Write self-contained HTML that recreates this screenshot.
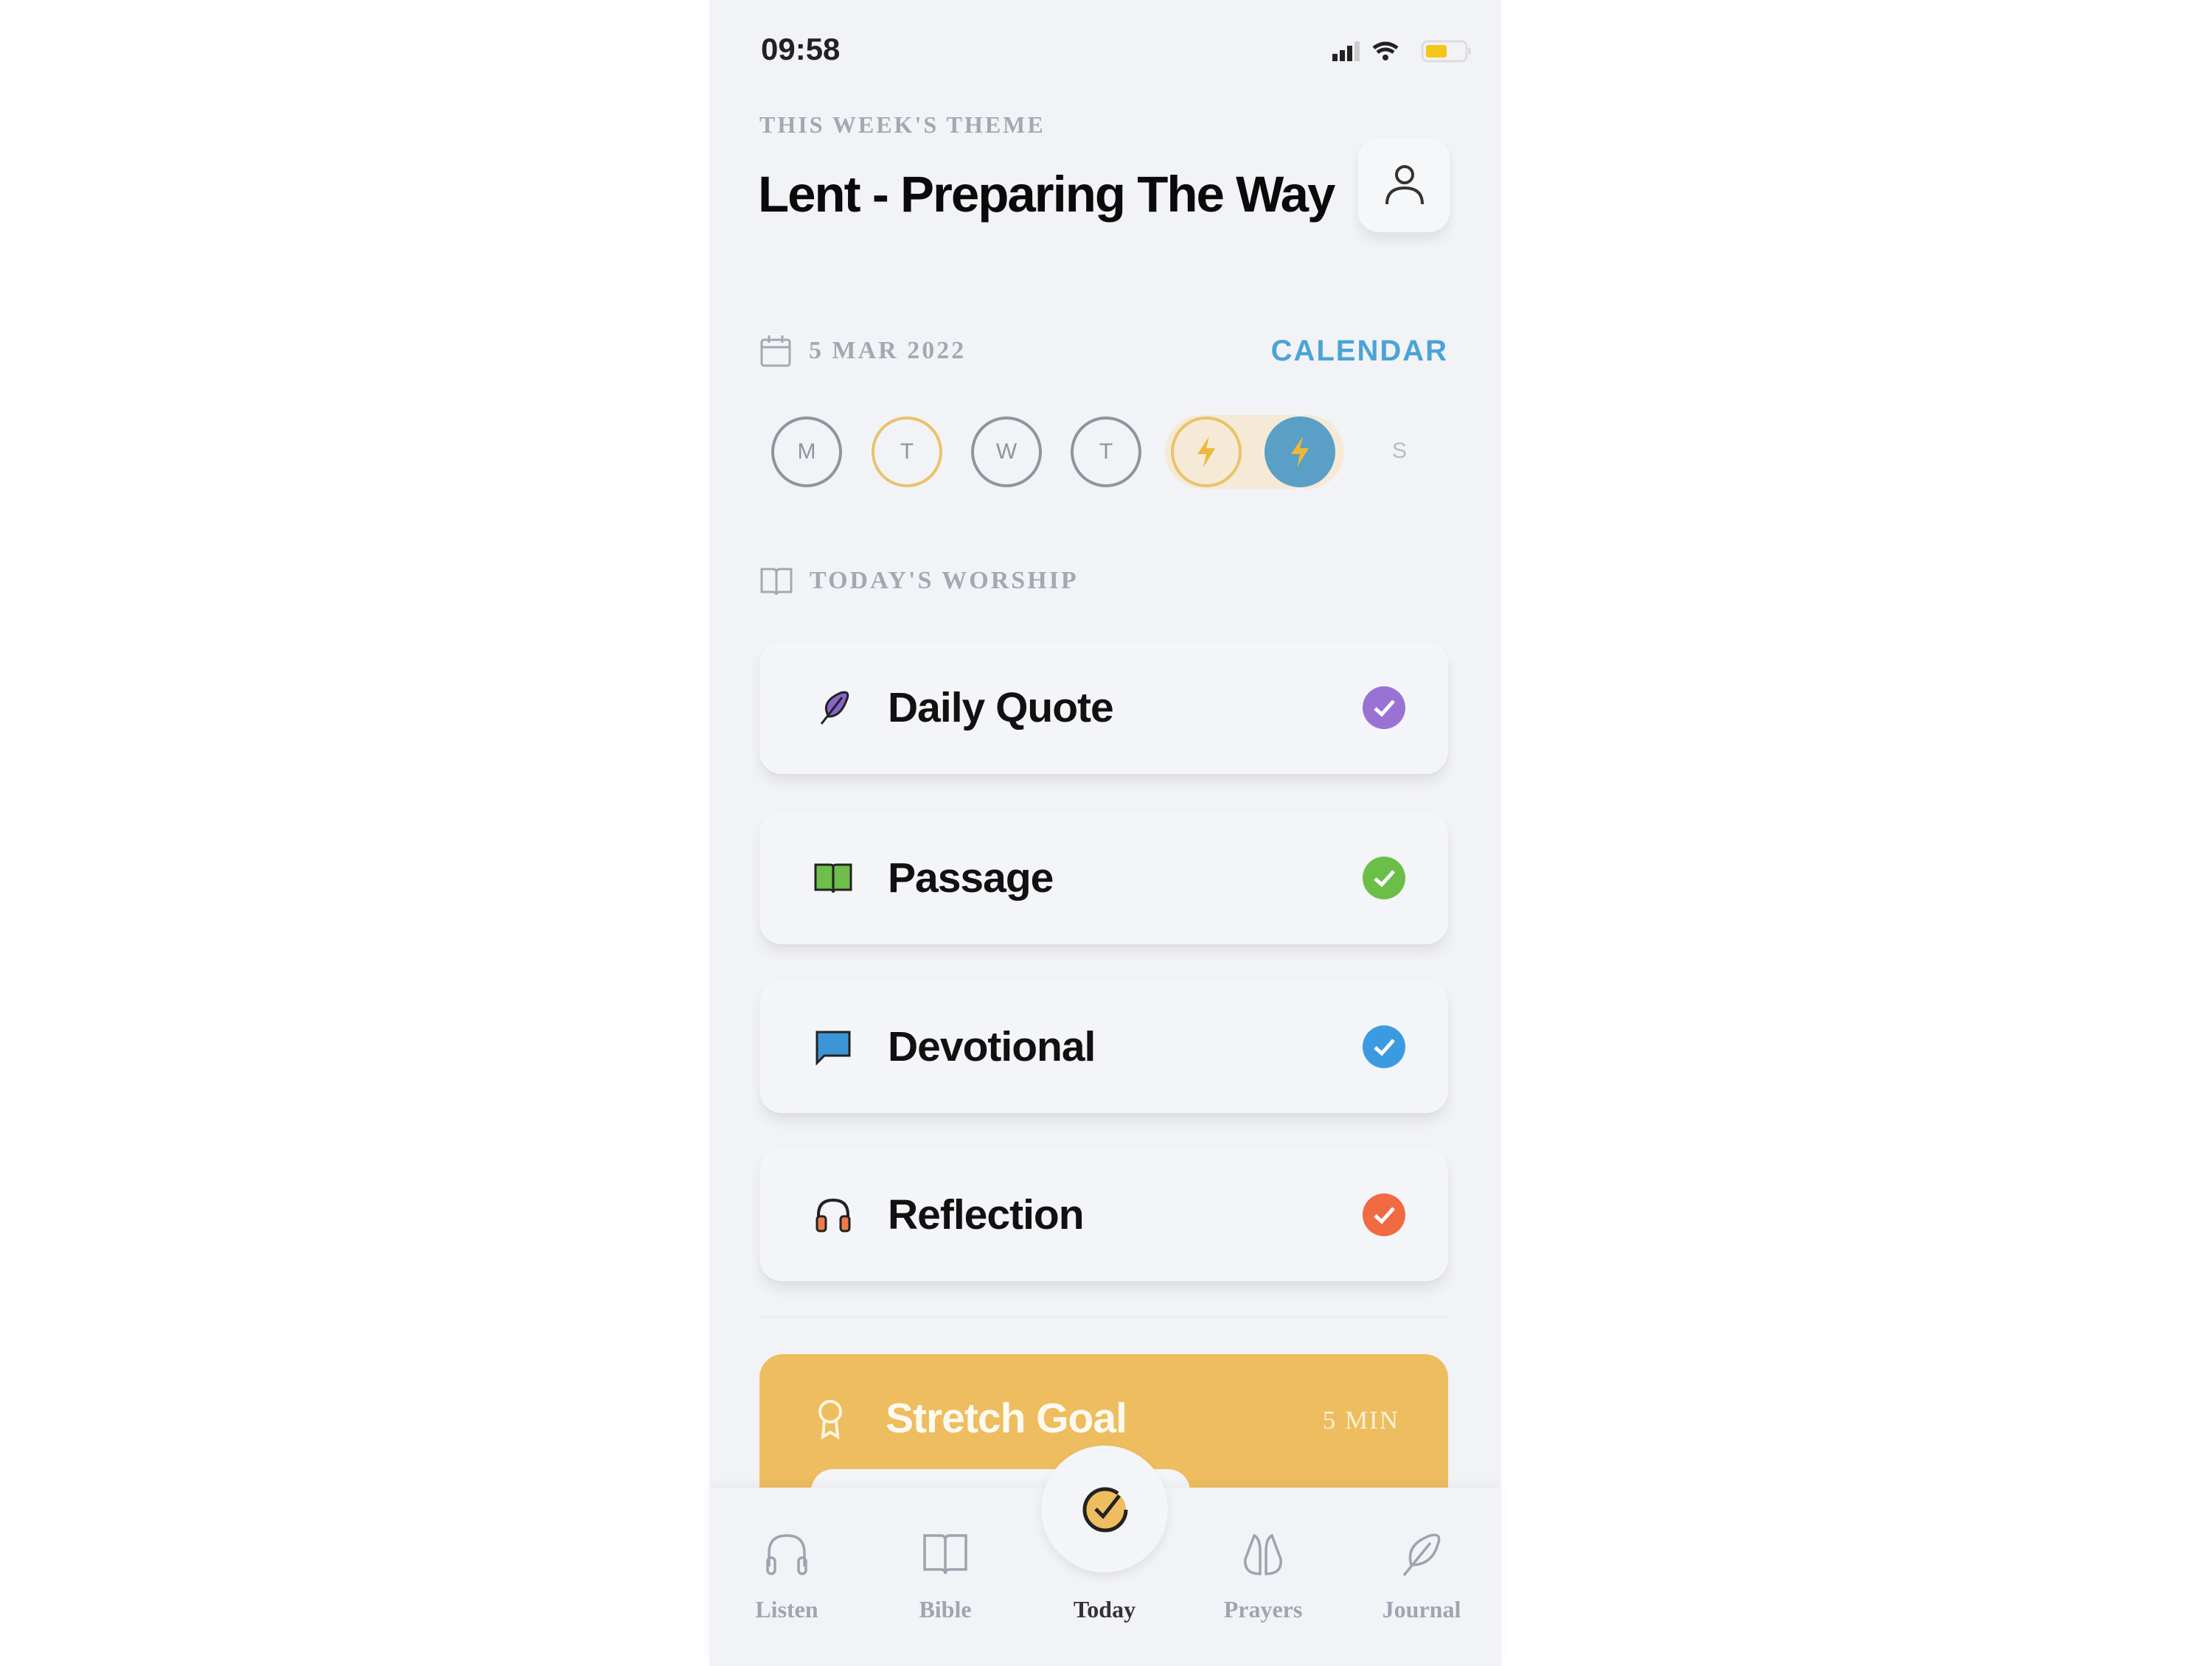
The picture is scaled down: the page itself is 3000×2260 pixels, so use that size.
<!DOCTYPE html>
<html><head><meta charset="utf-8">
<style>
*{margin:0;padding:0;box-sizing:border-box}
body{width:3000px;height:2250px;background:#fff;position:relative;overflow:hidden;font-family:"Liberation Sans",sans-serif}
#w{position:absolute;left:0;top:0;width:3000px;height:2250px;transform:translate(-8px,-5px)}
.ph{position:absolute;left:970px;top:0;width:1074px;height:2260px;background:#f2f3f7}
.a{position:absolute}
.serif{font-family:"Liberation Serif",serif}
.lbl{color:#a3a8b2;font-size:31px;letter-spacing:3px;font-weight:bold}
.card{position:absolute;left:1038px;width:934px;height:180px;border-radius:30px;background:#f4f5f8;box-shadow:0 12px 18px rgba(0,0,0,.07),0 2px 4px rgba(0,0,0,.04)}
.card .t{position:absolute;left:174px;top:50%;transform:translateY(-50%);font-size:57px;font-weight:bold;color:#111;letter-spacing:-1px}
.card .ic{position:absolute;left:72px;top:62px;width:56px;height:56px}
.card .ck{position:absolute;left:818px;top:61px;width:58px;height:58px;border-radius:50%}
.card .ck svg{position:absolute;left:0;top:0}
.day{position:absolute;top:567px;width:96px;height:96px;border-radius:50%;border:4px solid #8f949e;color:#8f949e;font-size:30px;text-align:center;line-height:88px}
.tab{position:absolute;top:2170px;width:200px;text-align:center;font-family:"Liberation Serif",serif;font-weight:bold;font-size:32px;color:#a0a5af}
.ti{position:absolute;top:2080px}
</style></head><body>
<div class="ph" style="left:962px"></div>
<div id="w">
<div class="a" style="left:1040px;top:48px;font-size:42px;font-weight:bold;color:#222">09:58</div>
<svg class="a" style="left:1815px;top:58px" width="190" height="34" viewBox="0 0 190 34">
<rect x="0" y="20" width="7" height="10" fill="#222"/><rect x="10" y="15" width="7" height="15" fill="#222"/><rect x="20" y="9" width="7" height="21" fill="#222"/><rect x="30" y="3" width="7" height="27" fill="#ccc"/>
<path d="M56 12 Q72 0 88 12" stroke="#222" stroke-width="5" fill="none"/><path d="M61 18 Q72 10 83 18" stroke="#222" stroke-width="5" fill="none"/><circle cx="72" cy="25" r="4" fill="#222"/>
<rect x="122" y="3" width="60" height="27" rx="7" fill="none" stroke="#ddd" stroke-width="3"/><rect x="127" y="8" width="28" height="17" rx="3" fill="#f5c518"/><rect x="184" y="12" width="4" height="9" fill="#ddd"/>
</svg>
<div class="a serif lbl" style="left:1038px;top:156px;font-size:32px">THIS WEEK'S THEME</div>
<div class="a" style="left:1036px;top:229px;font-size:69px;font-weight:bold;color:#0a0a0a;letter-spacing:-2px">Lent - Preparing The Way</div>
<div class="a" style="left:1850px;top:192px;width:124px;height:128px;border-radius:28px;background:#f6f7f9;box-shadow:0 10px 16px rgba(0,0,0,.08)"></div>
<svg class="a" style="left:1883px;top:226px" width="60" height="62" viewBox="0 0 60 62"><circle cx="30" cy="16" r="11" fill="none" stroke="#333" stroke-width="4"/><path d="M6 56 Q6 34 30 34 Q54 34 54 56" fill="none" stroke="#333" stroke-width="4"/></svg>
<svg class="a" style="left:1038px;top:458px" width="44" height="46" viewBox="0 0 44 46"><rect x="3" y="8" width="38" height="35" rx="3" fill="none" stroke="#a3a8b2" stroke-width="3"/><line x1="3" y1="18" x2="41" y2="18" stroke="#a3a8b2" stroke-width="3"/><line x1="13" y1="2" x2="13" y2="12" stroke="#a3a8b2" stroke-width="3"/><line x1="31" y1="2" x2="31" y2="12" stroke="#a3a8b2" stroke-width="3"/></svg>
<div class="a serif lbl" style="left:1105px;top:462px;font-size:34px">5 MAR 2022</div>
<div class="a" style="left:1730px;top:459px;width:242px;text-align:right;font-size:40px;font-weight:bold;color:#4ba3d6;letter-spacing:2px">CALENDAR</div>
<div class="a" style="left:1588px;top:568px;width:243px;height:100px;border-radius:50px;background:#f5ead6"></div>
<div class="day" style="left:1054px;top:570px">M</div>
<div class="day" style="left:1190px;top:570px;border-color:#eac26a">T</div>
<div class="day" style="left:1325px;top:570px">W</div>
<div class="day" style="left:1460px;top:570px">T</div>
<div class="day" style="left:1596px;top:570px;border-color:#eac26a"></div>
<div class="day" style="left:1723px;top:570px;border-color:#5a9fc6;background:#5a9fc6"></div>
<svg class="a" style="left:1624px;top:595px" width="40" height="46" viewBox="0 0 40 46"><path d="M24 2 L8 26 H20 L16 44 L32 18 H20 Z" fill="#f0b83a"/></svg>
<svg class="a" style="left:1751px;top:595px" width="40" height="46" viewBox="0 0 40 46"><path d="M24 2 L8 26 H20 L16 44 L32 18 H20 Z" fill="#f0b83a"/></svg>
<div class="a" style="left:1896px;top:600px;font-size:30px;color:#b8bcc4">S</div>
<svg class="a" style="left:1038px;top:772px" width="46" height="44" viewBox="0 0 46 44"><path d="M3 5 H18 Q23 5 23 10 V40 Q23 36 18 36 H3 Z M43 5 H28 Q23 5 23 10 V40 Q23 36 28 36 H43 Z" fill="none" stroke="#a3a8b2" stroke-width="3"/></svg>
<div class="a serif lbl" style="left:1106px;top:774px;font-size:34px">TODAY'S WORSHIP</div>

<div class="card" style="top:875px"><svg class="ic" viewBox="0 0 56 56"><path d="M12 50 L40 14 M22 40 Q10 20 38 8 Q52 4 46 18 Q38 40 22 40 Z" fill="#8a63c9" stroke="#222" stroke-width="3"/></svg><div class="t">Daily Quote</div><div class="ck" style="background:#9a72d4"><svg width="58" height="58"><path d="M17 30 L26 38 L42 20" stroke="#fff" stroke-width="5" fill="none"/></svg></div></div>
<div class="card" style="top:1106px"><svg class="ic" viewBox="0 0 56 56"><path d="M4 10 H24 Q28 10 28 14 V48 Q28 44 24 44 H4 Z M52 10 H32 Q28 10 28 14 V48 Q28 44 32 44 H52 Z" fill="#6fbe4a" stroke="#222" stroke-width="3"/></svg><div class="t">Passage</div><div class="ck" style="background:#6bbf48"><svg width="58" height="58"><path d="M17 30 L26 38 L42 20" stroke="#fff" stroke-width="5" fill="none"/></svg></div></div>
<div class="card" style="top:1335px"><svg class="ic" viewBox="0 0 56 56"><path d="M6 8 H50 V40 H16 L6 50 Z" fill="#3b94d6" stroke="#222" stroke-width="3"/></svg><div class="t">Devotional</div><div class="ck" style="background:#3c9be0"><svg width="58" height="58"><path d="M17 30 L26 38 L42 20" stroke="#fff" stroke-width="5" fill="none"/></svg></div></div>
<div class="card" style="top:1563px"><svg class="ic" viewBox="0 0 56 56"><path d="M8 38 V28 Q8 8 28 8 Q48 8 48 28 V38" fill="none" stroke="#222" stroke-width="4"/><rect x="6" y="30" width="12" height="20" rx="4" fill="#f07a4a" stroke="#222" stroke-width="3"/><rect x="38" y="30" width="12" height="20" rx="4" fill="#f07a4a" stroke="#222" stroke-width="3"/></svg><div class="t">Reflection</div><div class="ck" style="background:#f06a42"><svg width="58" height="58"><path d="M17 30 L26 38 L42 20" stroke="#fff" stroke-width="5" fill="none"/></svg></div></div>

<div class="a" style="left:1038px;top:1790px;width:934px;height:3px;background:#ebecf0"></div>
<div class="a" style="left:1038px;top:1842px;width:934px;height:240px;border-radius:32px;background:#edbd5f"></div>
<svg class="a" style="left:1112px;top:1902px" width="44" height="56" viewBox="0 0 44 56"><circle cx="22" cy="18" r="14" fill="none" stroke="#fff5dd" stroke-width="4"/><path d="M14 30 L12 52 L22 46 L32 52 L30 30" fill="none" stroke="#fff5dd" stroke-width="4"/></svg>
<div class="a" style="left:1209px;top:1896px;font-size:57px;font-weight:bold;color:#fffaf0;letter-spacing:-1px">Stretch Goal</div>
<div class="a serif" style="left:1760px;top:1912px;width:146px;text-align:right;font-size:35px;color:#fdf1d6;letter-spacing:2px">5 MIN</div>
<div class="a" style="left:1108px;top:1998px;width:514px;height:60px;border-radius:30px;background:#f4f5f8"></div>
<div class="a" style="left:970px;top:2023px;width:1074px;height:240px;background:#f2f3f7;box-shadow:0 -6px 14px rgba(0,0,0,.04)"></div>
<div class="a" style="left:1420px;top:1966px;width:172px;height:172px;border-radius:50%;background:#f4f5f8;box-shadow:0 6px 14px rgba(0,0,0,.08)"></div>
<svg class="a" style="left:1472px;top:2018px" width="70" height="70" viewBox="0 0 70 70"><circle cx="35" cy="35" r="28" fill="#edbd5f" stroke="#222" stroke-width="5" stroke-dasharray="150 26"/><path d="M22 34 L32 44 L54 16" stroke="#222" stroke-width="5" fill="none"/></svg>
<svg class="ti" style="left:1043px" width="64" height="66" viewBox="0 0 64 66"><path d="M8 50 V32 Q8 8 32 8 Q56 8 56 32 V50" fill="none" stroke="#9ea3ad" stroke-width="3.5"/><rect x="6" y="38" width="10" height="22" rx="5" fill="none" stroke="#9ea3ad" stroke-width="3.5"/><rect x="48" y="38" width="10" height="22" rx="5" fill="none" stroke="#9ea3ad" stroke-width="3.5"/></svg>
<svg class="ti" style="left:1258px" width="64" height="66" viewBox="0 0 64 66"><path d="M4 8 H26 Q32 8 32 14 V60 Q32 54 26 54 H4 Z M60 8 H38 Q32 8 32 14 V60 Q32 54 38 54 H60 Z" fill="none" stroke="#9ea3ad" stroke-width="3.5"/></svg>
<svg class="ti" style="left:1689px" width="64" height="66" viewBox="0 0 64 66"><path d="M28 60 Q6 60 8 40 L20 8 Q28 12 28 30 Z M36 60 Q58 60 56 40 L44 8 Q36 12 36 30 Z" fill="none" stroke="#9ea3ad" stroke-width="3.5"/></svg>
<svg class="ti" style="left:1904px" width="64" height="66" viewBox="0 0 64 66"><path d="M8 62 L44 18 M18 48 Q10 20 44 8 Q60 4 54 20 Q46 48 18 48 Z" fill="none" stroke="#9ea3ad" stroke-width="3.5"/></svg>
<div class="tab" style="left:975px">Listen</div>
<div class="tab" style="left:1190px">Bible</div>
<div class="tab" style="left:1406px;color:#333">Today</div>
<div class="tab" style="left:1621px">Prayers</div>
<div class="tab" style="left:1836px">Journal</div>
</div>
</body></html>
